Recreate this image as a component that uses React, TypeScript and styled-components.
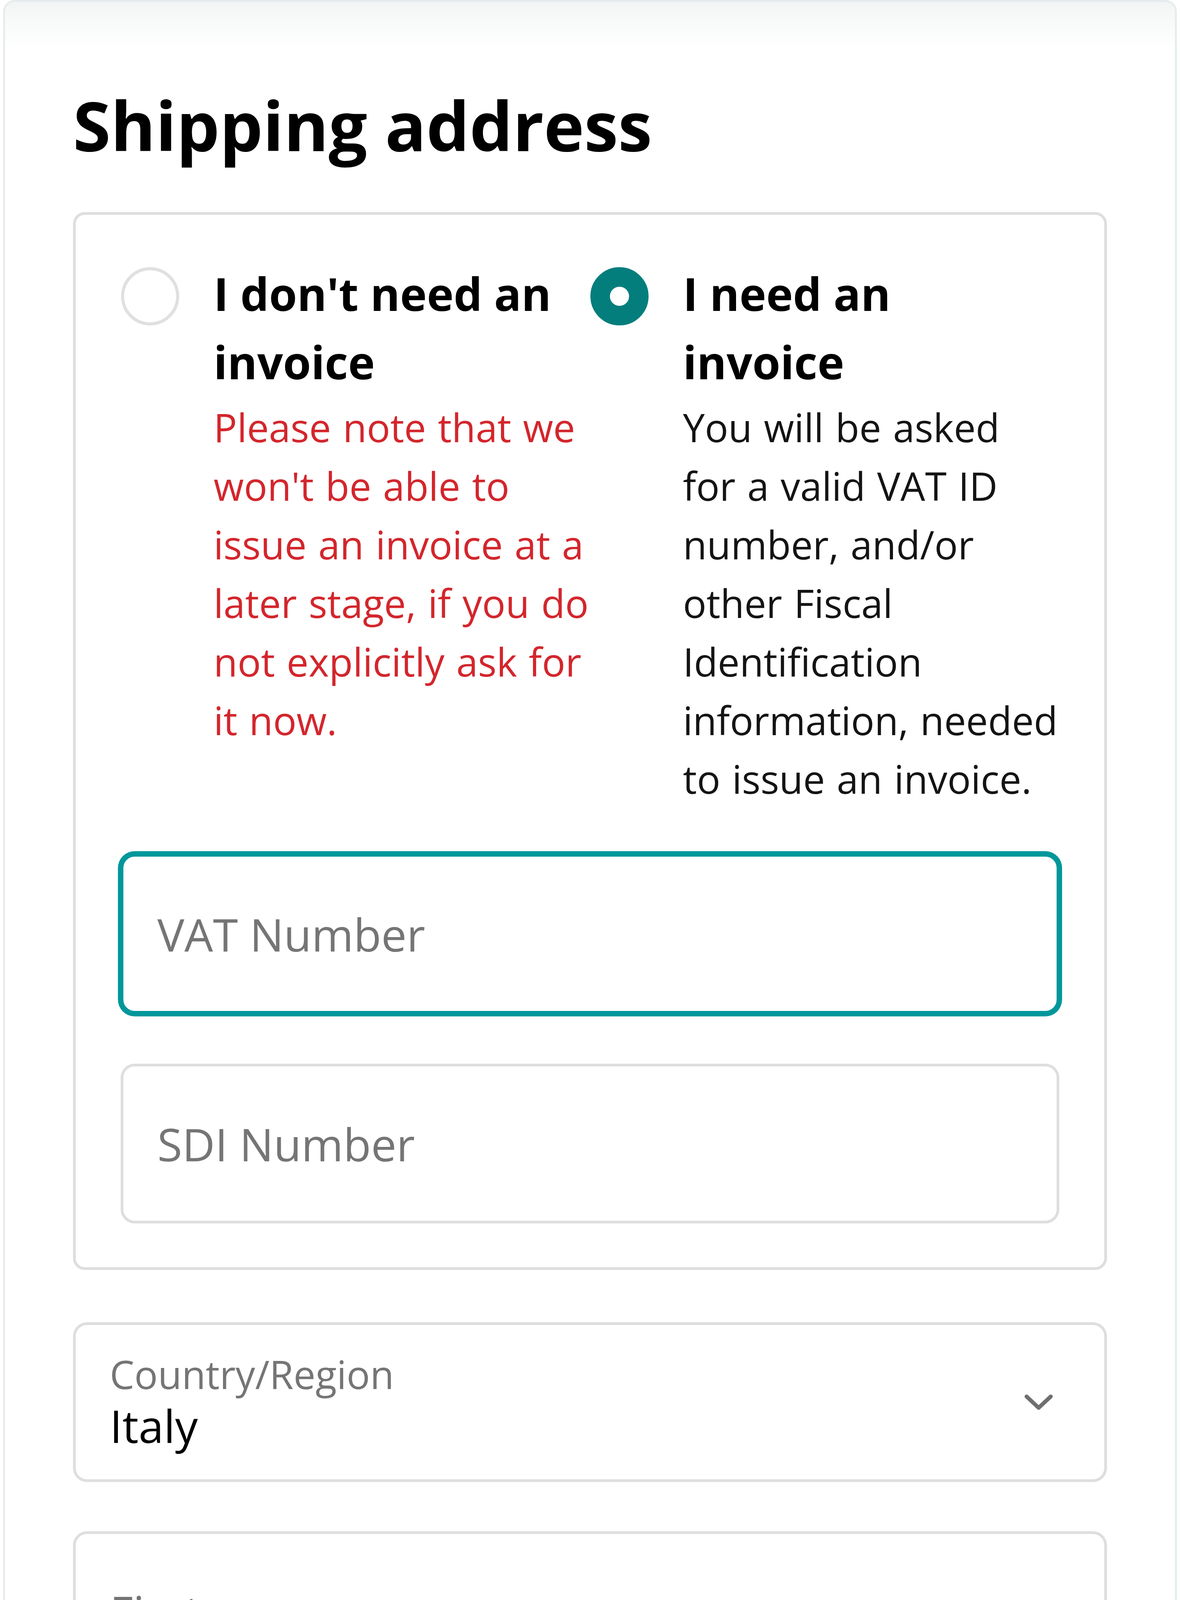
import React from "react";
import styled, { createGlobalStyle } from "styled-components";

const GlobalStyle = createGlobalStyle`
  html, body {
    margin: 0;
    padding: 0;
    background: #ffffff;
  }
  * { box-sizing: border-box; }
  body {
    font-family: "Open Sans", "Noto Sans", "Liberation Sans", sans-serif;
    color: #000;
  }
`;

const Page = styled.div`
  position: relative;
  height: 5687px;
  padding: 0 8px;
  overflow: hidden;
`;

const Card = styled.section`
  position: relative;
  border: 5px solid #e6eced;
  border-radius: 30px;
  padding: 195px 174px 60px;
  background: #ffffff;
`;

const TopShade = styled.div`
  position: absolute;
  top: 0;
  left: 0;
  right: 0;
  height: 120px;
  border-radius: 26px 26px 0 0;
  background: linear-gradient(to bottom, rgba(20, 60, 60, 0.05), rgba(20, 60, 60, 0));
  pointer-events: none;
`;

const BottomFade = styled.div`
  position: absolute;
  left: 0;
  right: 0;
  top: 4266px;
  bottom: 0;
  background: linear-gradient(to bottom, rgba(255, 255, 255, 0) 0px, #ffffff 960px);
  pointer-events: none;
`;

const Heading = styled.h2`
  margin: 0 0 105px;
  font-size: 175px;
  line-height: 238px;
  font-weight: 700;
  color: #000;
`;

const InvoiceBox = styled.div`
  border: 7px solid #dedede;
  border-radius: 30px;
  padding: 114px 115px 112px;
`;

const Options = styled.div`
  display: grid;
  grid-template-columns: 1fr 1fr;
`;

const Option = styled.label`
  display: flex;
  align-items: flex-start;
  gap: 88px;
  padding-left: 1px;
  cursor: pointer;
`;

const Radio = styled.span<{ $checked?: boolean }>`
  flex: 0 0 auto;
  width: 149px;
  height: 149px;
  margin-top: 20px;
  border-radius: 50%;
  background: #ffffff;
  border: ${(p) => (p.$checked ? "50px solid #037e7c" : "8px solid #e0e0e0")};
`;

const OptionText = styled.div`
  display: flex;
  flex-direction: column;
  min-width: 0;
`;

const OptionTitle = styled.span`
  font-size: 116px;
  line-height: 175px;
  font-weight: 700;
  color: #000;
`;

const OptionDesc = styled.span<{ $warn?: boolean }>`
  margin-top: 4px;
  font-size: 100px;
  line-height: 150px;
  font-weight: 400;
  word-spacing: 4px;
  color: ${(p) => (p.$warn ? "#d3262c" : "#141414")};
`;

const BoxFields = styled.div`
  display: flex;
  flex-direction: column;
  gap: 128px;
  margin-top: 118px;
`;

const TextInput = styled.input<{ $focused?: boolean }>`
  display: block;
  width: 100%;
  height: 409px;
  margin: 0;
  padding: 0 87px;
  border: 7px solid ${(p) => (p.$focused ? "#00979b" : "#dedede")};
  border-radius: 36px;
  box-shadow: ${(p) => (p.$focused ? "0 0 0 7px #00979b" : "none")};
  outline: none;
  background: #ffffff;
  font-family: "Open Sans", "Noto Sans", sans-serif;
  font-size: 116px;
  color: #000;
  &::placeholder {
    color: #757575;
    opacity: 1;
  }
`;

const Fields = styled.div`
  display: flex;
  flex-direction: column;
  gap: 126px;
  margin-top: 134px;
`;

const SelectBox = styled.div`
  display: flex;
  align-items: center;
  justify-content: space-between;
  height: 409px;
  padding: 0 132px 0 87px;
  border: 7px solid #dedede;
  border-radius: 36px;
  background: #ffffff;
`;

const SelectTexts = styled.div`
  display: flex;
  flex-direction: column;
`;

const SelectLabel = styled.span`
  font-size: 100px;
  line-height: 120px;
  color: #757575;
`;

const SelectValue = styled.span`
  font-size: 116px;
  line-height: 145px;
  color: #000;
`;

const Chevron = () => (
  <svg width="72" height="40" viewBox="0 0 72 40" fill="none" aria-hidden="true">
    <path
      d="M5 5 L36 34 L67 5"
      stroke="#6f6f6f"
      strokeWidth="10"
      strokeLinecap="round"
      strokeLinejoin="round"
    />
  </svg>
);

export default function App() {
  return (
    <>
      <GlobalStyle />
      <Page>
        <Card>
          <TopShade />
          <Heading>Shipping address</Heading>
          <InvoiceBox>
            <Options>
              <Option>
                <Radio />
                <OptionText>
                  <OptionTitle>I don't need an invoice</OptionTitle>
                  <OptionDesc $warn>
                    Please note that we won't be able to issue an invoice at a later stage, if you do
                    not explicitly ask for it now.
                  </OptionDesc>
                </OptionText>
              </Option>
              <Option>
                <Radio $checked />
                <OptionText>
                  <OptionTitle>I need an invoice</OptionTitle>
                  <OptionDesc>
                    You will be asked for a valid VAT ID number, and/or other Fiscal Identification
                    information, needed to issue an invoice.
                  </OptionDesc>
                </OptionText>
              </Option>
            </Options>
            <BoxFields>
              <TextInput $focused placeholder="VAT Number" />
              <TextInput placeholder="SDI Number" />
            </BoxFields>
          </InvoiceBox>
          <Fields>
            <SelectBox>
              <SelectTexts>
                <SelectLabel>Country/Region</SelectLabel>
                <SelectValue>Italy</SelectValue>
              </SelectTexts>
              <Chevron />
            </SelectBox>
            <TextInput placeholder="First name" />
            <TextInput placeholder="Last name" />
            <TextInput placeholder="Company (optional)" />
          </Fields>
        </Card>
        <BottomFade />
      </Page>
    </>
  );
}
